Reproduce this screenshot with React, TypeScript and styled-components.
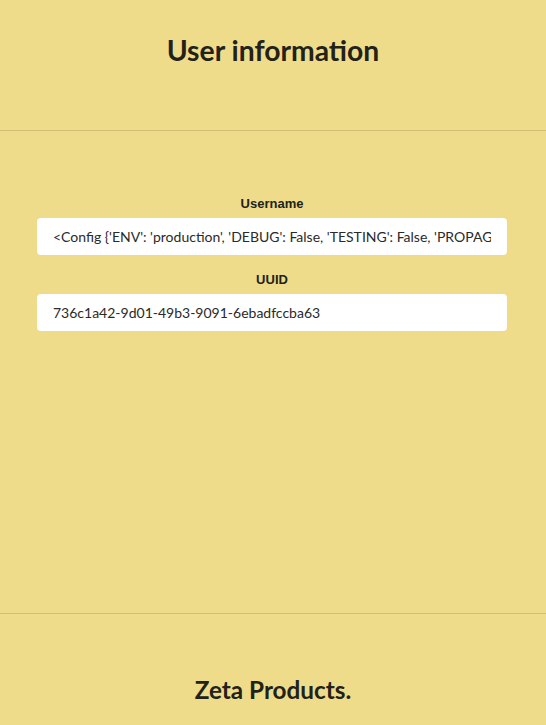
import React from "react";
import styled, { createGlobalStyle } from "styled-components";

const Global = createGlobalStyle`
  html, body { margin: 0; padding: 0; background: #efdc8b; }
  body { font-family: Lato, "Liberation Sans", sans-serif; color: #222218; }
`;

const Page = styled.div`
  display: flex;
  flex-direction: column;
  min-height: 725px;
  background: #efdc8b;
`;

const Header = styled.header`
  height: 130px;
  display: flex;
  justify-content: center;
  align-items: flex-start;
  border-bottom: 1px solid #d3bf74;
`;

const Title = styled.h1`
  margin: 33px 0 0;
  font-family: Lato, sans-serif;
  font-weight: 700;
  font-size: 28.3px;
  line-height: 34px;
  color: #222218;
`;

const Main = styled.main`
  height: 483px;
  box-sizing: border-box;
  padding: 65px 39px 0 37px;
  display: flex;
  flex-direction: column;
  border-bottom: 1px solid #d3bf74;
`;

const Field = styled.div<{ $gap?: number }>`
  display: flex;
  flex-direction: column;
  align-items: stretch;
  margin-bottom: ${(p) => p.$gap ?? 0}px;
`;

const Label = styled.label`
  font-family: "Liberation Sans", Arial, sans-serif;
  font-weight: 700;
  font-size: 13px;
  line-height: 15px;
  text-align: center;
  color: #222218;
  margin-bottom: 7px;
`;

const Input = styled.input`
  height: 37px;
  box-sizing: border-box;
  border: none;
  border-radius: 4px;
  background: #fff;
  padding: 0 16px;
  font-family: Lato, sans-serif;
  font-size: 14px;
  color: #2a2a2a;
  outline: none;
`;

const Footer = styled.footer`
  flex: 1;
  display: flex;
  justify-content: center;
  align-items: flex-start;
`;

const Brand = styled.h2`
  margin: 61px 0 0;
  font-family: Lato, sans-serif;
  font-weight: 700;
  font-size: 24.3px;
  line-height: 30px;
  color: #222218;
`;

export default function App() {
  return (
    <Page>
      <Global />
      <Header>
        <Title>User information</Title>
      </Header>
      <Main>
        <Field $gap={17}>
          <Label>Username</Label>
          <Input
            readOnly
            value="<Config {'ENV': 'production', 'DEBUG': False, 'TESTING': False, 'PROPAGATE_EXCEPTIONS': None}>"
          />
        </Field>
        <Field>
          <Label>UUID</Label>
          <Input readOnly value="736c1a42-9d01-49b3-9091-6ebadfccba63" />
        </Field>
      </Main>
      <Footer>
        <Brand>Zeta Products.</Brand>
      </Footer>
    </Page>
  );
}
